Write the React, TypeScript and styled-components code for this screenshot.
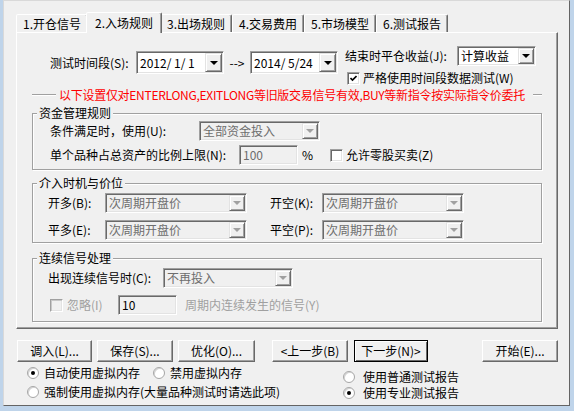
import React from 'react'
import styled, { createGlobalStyle } from 'styled-components'

const GlobalStyle = createGlobalStyle`
  html, body { margin: 0; padding: 0; }
  body {
    width: 574px;
    height: 411px;
    overflow: hidden;
    background: #bfd4ea;
    font-family: "Noto Sans CJK SC", "Noto Sans", sans-serif;
    font-size: 12px;
    line-height: 14px;
    color: #000;
  }
  * { box-sizing: border-box; }
`

const Frame = styled.div`
  height: 411px;
  padding-left: 3px;
`

const Dialog = styled.div`
  width: 567px;
  height: 406px;
  background: #f0f0f0;
  border: 1px solid;
  border-color: #d9d9d9 #646464 #646464 #d9d9d9;
`

const TabStrip = styled.div`
  display: flex;
  align-items: flex-end;
  height: 31px;
  padding-left: 12px;
`

const Tab = styled.div<{ $active?: boolean }>`
  position: relative;
  z-index: ${p => (p.$active ? 2 : 1)};
  display: flex;
  align-items: center;
  height: ${p => (p.$active ? 21 : 18)}px;
  padding: 0 ${p => (p.$active ? 8 : 6)}px;
  margin: 0 ${p => (p.$active ? -2 : 0)}px ${p => (p.$active ? -1 : 0)}px;
  background: #f0f0f0;
  border: 1px solid;
  border-bottom: none;
  border-color: #fff #696969 transparent #fff;
  border-radius: 2px 2px 0 0;
  box-shadow: inset -1px 0 0 #a0a0a0;
  white-space: nowrap;
`

const TabPanel = styled.div`
  width: 542px;
  height: 297px;
  margin-left: 12px;
  padding-top: 13px;
  border: 1px solid;
  border-color: #fff #696969 #696969 #fff;
  box-shadow: inset -1px -1px 0 #a0a0a0;
`

const TopRow = styled.div`
  display: flex;
  height: 40px;
  padding-left: 33px;
`

const DateRange = styled.div`
  display: flex;
  align-items: center;
  height: 23px;
  margin-top: 5px;
`

const RangeArrow = styled.span`
  width: 26px;
  text-align: center;
`

const EndOptions = styled.div`
  display: flex;
  flex-direction: column;
  gap: 4px;
  margin-left: 7px;
`

const Row = styled.div<{ $h?: number; $pl?: number }>`
  display: flex;
  align-items: center;
  height: ${p => p.$h ?? 20}px;
  padding-left: ${p => p.$pl ?? 0}px;
  white-space: nowrap;
`

const Label = styled.span<{ $w?: number; $ml?: number; $disabled?: boolean }>`
  flex: none;
  width: ${p => (p.$w ? `${p.$w}px` : 'auto')};
  margin-left: ${p => p.$ml ?? 0}px;
  color: ${p => (p.$disabled ? '#a0a0a0' : '#000')};
  white-space: nowrap;
`

const Sunken = styled.div<{ $w: number; $h?: number; $disabled?: boolean }>`
  flex: none;
  display: flex;
  align-items: stretch;
  width: ${p => p.$w}px;
  height: ${p => p.$h ?? 20}px;
  padding: 1px;
  background: ${p => (p.$disabled ? '#f0f0f0' : '#fff')};
  border: 1px solid;
  border-color: #a0a0a0 #fff #fff #a0a0a0;
  box-shadow: inset 1px 1px 0 #696969, inset -1px -1px 0 #e3e3e3;
`

const FieldText = styled.span<{ $dim?: boolean }>`
  flex: 1;
  display: flex;
  align-items: center;
  padding-left: 2px;
  color: ${p => (p.$dim ? '#6d6d6d' : '#000')};
  white-space: pre;
  overflow: hidden;
`

const DropButton = styled.span<{ $w?: number }>`
  flex: none;
  display: flex;
  align-items: center;
  justify-content: center;
  width: ${p => p.$w ?? 16}px;
  background: #f0f0f0;
  border: 1px solid;
  border-color: #e3e3e3 #696969 #696969 #e3e3e3;
  box-shadow: inset 1px 1px 0 #fff, inset -1px -1px 0 #a0a0a0;
`

const DropArrow = styled.span<{ $disabled?: boolean }>`
  width: 0;
  height: 0;
  border-left: 4px solid transparent;
  border-right: 4px solid transparent;
  border-top: 4px solid ${p => (p.$disabled ? '#a0a0a0' : '#000')};
`

const Box = styled.span<{ $disabled?: boolean }>`
  flex: none;
  display: flex;
  align-items: center;
  justify-content: center;
  width: 13px;
  height: 13px;
  background: ${p => (p.$disabled ? '#f0f0f0' : '#fff')};
  border: 1px solid;
  border-color: #a0a0a0 #fff #fff #a0a0a0;
  box-shadow: inset 1px 1px 0 ${p => (p.$disabled ? '#c8c8c8' : '#696969')},
    inset -1px -1px 0 #e3e3e3;
`

const RadioDot = styled.span<{ $checked?: boolean }>`
  flex: none;
  position: relative;
  width: 12px;
  height: 12px;
  border-radius: 50%;
  background: #fff;
  border: 1px solid #a6a6a6;
  box-shadow: inset 1px 1px 0 #d4d4d4;

  &::after {
    content: '';
    display: ${p => (p.$checked ? 'block' : 'none')};
    position: absolute;
    left: 3px;
    top: 3px;
    width: 4px;
    height: 4px;
    border-radius: 50%;
    background: #000;
  }
`

const Notice = styled.div`
  display: flex;
  align-items: center;
  height: 14px;
  margin: 2px 15px 0;
  color: #f00;
  white-space: nowrap;

  &::before,
  &::after {
    content: '';
    height: 0;
    border-top: 1px solid #a0a0a0;
    border-bottom: 1px solid #fff;
  }
  &::before {
    flex: none;
    width: 24px;
    margin-right: 3px;
  }
  &::after {
    flex: 1;
    margin-left: 8px;
  }
`

const NoticeText = styled.span`
  flex: none;
  letter-spacing: -0.28px;
`

const Group = styled.fieldset<{ $mt: number }>`
  margin: ${p => p.$mt}px 15px 0;
  padding: 0;
  min-width: 0;
  border: 1px solid #a0a0a0;
  box-shadow: inset 1px 1px 0 #fff, 1px 1px 0 #fff;
`

const Legend = styled.legend`
  margin-left: 4px;
  padding: 0 2px;
  line-height: 14px;
  background: #f0f0f0;
`

const GroupBody = styled.div<{ $pt: number; $pb: number; $gap: number }>`
  display: flex;
  flex-direction: column;
  gap: ${p => p.$gap}px;
  padding: ${p => p.$pt}px 0 ${p => p.$pb}px;
`

const ButtonBar = styled.div`
  display: flex;
  margin-top: 11px;
  padding: 0 11px 0 13px;
`

const ButtonGroup = styled.div<{ $gap: number; $ml?: string }>`
  display: flex;
  gap: ${p => p.$gap}px;
  margin-left: ${p => p.$ml ?? '0'};
`

const PushButton = styled.button<{ $w: number; $default?: boolean }>`
  width: ${p => p.$w}px;
  height: 22px;
  padding: 0;
  font: inherit;
  color: #000;
  background: #f0f0f0;
  border: 1px solid;
  border-color: ${p => (p.$default ? '#000' : '#fff #696969 #696969 #fff')};
  box-shadow: ${p =>
    p.$default
      ? 'inset 1px 1px 0 #fff, inset -1px -1px 0 #696969'
      : 'inset -1px -1px 0 #a0a0a0'};
  white-space: nowrap;
`

const RadioArea = styled.div`
  display: flex;
  margin-top: 3px;
  padding-left: 23px;
`

const RadioColumn = styled.div<{ $w?: number; $mt?: number; $gap: number }>`
  display: flex;
  flex-direction: column;
  gap: ${p => p.$gap}px;
  width: ${p => (p.$w ? `${p.$w}px` : 'auto')};
  margin-top: ${p => p.$mt ?? 0}px;
`

const RadioRow = styled.div`
  display: flex;
  align-items: center;
  height: 16px;
  white-space: nowrap;
`

const RadioText = styled.span<{ $gap: number; $after?: number }>`
  margin-left: ${p => p.$gap}px;
  margin-right: ${p => p.$after ?? 0}px;
`

const CheckMark = () => (
  <svg width="7" height="7" viewBox="0 0 7 7">
    <path d="M0.5 3 L2.5 5 L6.5 1" fill="none" stroke="#000" strokeWidth="1.6" />
  </svg>
)

const Combo = ({ w, h, text, disabled, btn }: { w: number; h?: number; text: string; disabled?: boolean; btn?: number }) => (
  <Sunken $w={w} $h={h} $disabled={disabled}>
    <FieldText $dim={disabled}>{text}</FieldText>
    <DropButton $w={btn}>
      <DropArrow $disabled={disabled} />
    </DropButton>
  </Sunken>
)

const tabs = ['1.开仓信号', '2.入场规则', '3.出场规则', '4.交易费用', '5.市场模型', '6.测试报告']

export default function App() {
  return (
    <Frame>
      <GlobalStyle />
      <Dialog>
        <TabStrip>
          {tabs.map((t, i) => (
            <Tab key={t} $active={i === 1}>{t}</Tab>
          ))}
        </TabStrip>
        <TabPanel>
          <TopRow>
            <DateRange>
              <Label $w={86}>测试时间段(S):</Label>
              <Combo w={88} h={23} text="2012/ 1/ 1" btn={17} />
              <RangeArrow>--&gt;</RangeArrow>
              <Combo w={88} h={23} text="2014/ 5/24" btn={17} />
            </DateRange>
            <EndOptions>
              <Row>
                <Label $w={112}>结束时平仓收益(J):</Label>
                <Combo w={79} text="计算收益" />
              </Row>
              <Row $h={16} $pl={2}>
                <Box><CheckMark /></Box>
                <Label $ml={3}>严格使用时间段数据测试(W)</Label>
              </Row>
            </EndOptions>
          </TopRow>

          <Notice>
            <NoticeText>以下设置仅对ENTERLONG,EXITLONG等旧版交易信号有效,BUY等新指令按实际指令价委托</NoticeText>
          </Notice>

          <Group $mt={4}>
            <Legend>资金管理规则</Legend>
            <GroupBody $pt={1} $pb={4} $gap={4}>
              <Row $pl={17}>
                <Label $w={149}>条件满足时，使用(U):</Label>
                <Combo w={121} text="全部资金投入" disabled />
              </Row>
              <Row $pl={17}>
                <Label $w={189}>单个品种占总资产的比例上限(N):</Label>
                <Sunken $w={59} $disabled>
                  <FieldText $dim>100</FieldText>
                </Sunken>
                <Label $w={28} $ml={4}>%</Label>
                <Box />
                <Label $ml={3}>允许零股买卖(Z)</Label>
              </Row>
            </GroupBody>
          </Group>

          <Group $mt={6}>
            <Legend>介入时机与价位</Legend>
            <GroupBody $pt={3} $pb={2} $gap={7}>
              <Row $pl={15}>
                <Label $w={57}>开多(B):</Label>
                <Combo w={142} text="次周期开盘价" disabled />
                <Label $w={52} $ml={23}>开空(K):</Label>
                <Combo w={142} text="次周期开盘价" disabled />
              </Row>
              <Row $pl={15}>
                <Label $w={57}>平多(E):</Label>
                <Combo w={142} text="次周期开盘价" disabled />
                <Label $w={52} $ml={23}>平空(P):</Label>
                <Combo w={142} text="次周期开盘价" disabled />
              </Row>
            </GroupBody>
          </Group>

          <Group $mt={8}>
            <Legend>连续信号处理</Legend>
            <GroupBody $pt={3} $pb={6} $gap={7}>
              <Row $pl={15}>
                <Label $w={115}>出现连续信号时(C):</Label>
                <Combo w={130} text="不再投入" disabled />
              </Row>
              <Row $pl={17}>
                <Box $disabled />
                <Label $w={51} $ml={4} $disabled>忽略(I)</Label>
                <Sunken $w={59} $disabled>
                  <FieldText>10</FieldText>
                </Sunken>
                <Label $ml={8} $disabled>周期内连续发生的信号(Y)</Label>
              </Row>
            </GroupBody>
          </Group>
        </TabPanel>

        <ButtonBar>
          <ButtonGroup $gap={5}>
            <PushButton $w={75}>调入(L)...</PushButton>
            <PushButton $w={76}>保存(S)...</PushButton>
            <PushButton $w={77}>优化(O)...</PushButton>
          </ButtonGroup>
          <ButtonGroup $gap={6} $ml="17px">
            <PushButton $w={76}>&lt;上一步(B)</PushButton>
            <PushButton $w={74} $default>下一步(N)&gt;</PushButton>
          </ButtonGroup>
          <ButtonGroup $gap={0} $ml="auto">
            <PushButton $w={76}>开始(E)...</PushButton>
          </ButtonGroup>
        </ButtonBar>

        <RadioArea>
          <RadioColumn $w={316} $gap={3}>
            <RadioRow>
              <RadioDot $checked />
              <RadioText $gap={5} $after={13}>自动使用虚拟内存</RadioText>
              <RadioDot />
              <RadioText $gap={5}>禁用虚拟内存</RadioText>
            </RadioRow>
            <RadioRow>
              <RadioDot />
              <RadioText $gap={5}>强制使用虚拟内存(大量品种测试时请选此项)</RadioText>
            </RadioRow>
          </RadioColumn>
          <RadioColumn $mt={4} $gap={0}>
            <RadioRow>
              <RadioDot />
              <RadioText $gap={8}>使用普通测试报告</RadioText>
            </RadioRow>
            <RadioRow>
              <RadioDot $checked />
              <RadioText $gap={8}>使用专业测试报告</RadioText>
            </RadioRow>
          </RadioColumn>
        </RadioArea>
      </Dialog>
    </Frame>
  )
}
